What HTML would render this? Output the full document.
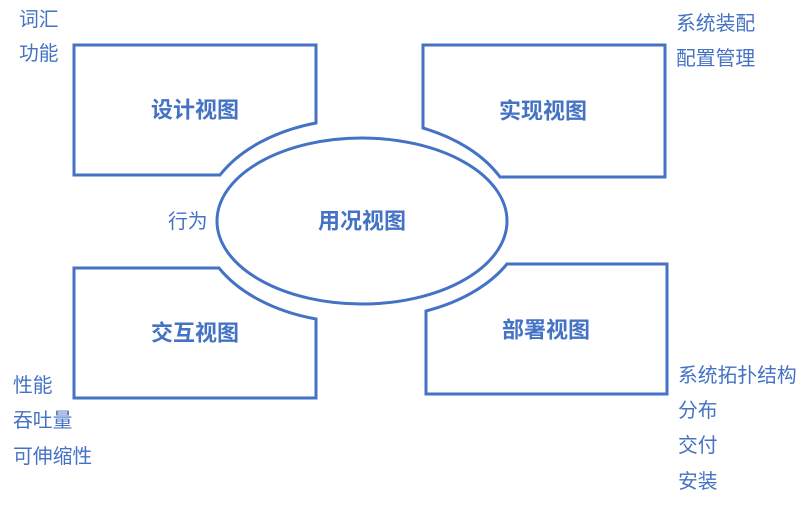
<!DOCTYPE html>
<html><head><meta charset="utf-8"><style>
html,body{margin:0;padding:0;background:#fff;}
svg{display:block;}
text{font-family:"Liberation Sans","Noto Sans CJK SC",sans-serif;fill:#4472C4;dominant-baseline:central;}
.b{font-weight:bold;font-size:22px;text-anchor:middle;}
.s{font-size:19.8px;}
</style></head><body>
<svg width="810" height="507" viewBox="0 0 810 507" xmlns="http://www.w3.org/2000/svg">
<g fill="none" stroke="#4472C4" stroke-width="3">
<ellipse cx="362" cy="221" rx="145" ry="83"/>
<path d="M74 45 L316 45 L316 123 A157 103 0 0 0 220 175 L74 175 Z"/>
<path d="M423 45 L665 45 L665 177 L500 177 A157 103 0 0 0 423 128 Z"/>
<path d="M74 268 L219 268 A157 103 0 0 0 316 319 L316 398 L74 398 Z"/>
<path d="M507 264 L667 264 L667 394 L426 394 L426 311 A157 103 0 0 0 507 264 Z"/>
</g>
<text class="b" x="195" y="110">设计视图</text>
<text class="b" x="543" y="111">实现视图</text>
<text class="b" x="362" y="221">用况视图</text>
<text class="b" x="195" y="333">交互视图</text>
<text class="b" x="546" y="330">部署视图</text>
<text class="s" x="19" y="20">词汇</text>
<text class="s" x="19" y="54">功能</text>
<text class="s" x="676" y="24">系统装配</text>
<text class="s" x="676" y="59">配置管理</text>
<text class="s" x="168" y="222">行为</text>
<text class="s" x="13" y="386">性能</text>
<text class="s" x="13" y="421">吞吐量</text>
<text class="s" x="13" y="457">可伸缩性</text>
<text class="s" x="678" y="376">系统拓扑结构</text>
<text class="s" x="678" y="411">分布</text>
<text class="s" x="678" y="446">交付</text>
<text class="s" x="678" y="482">安装</text>
</svg>
</body></html>
